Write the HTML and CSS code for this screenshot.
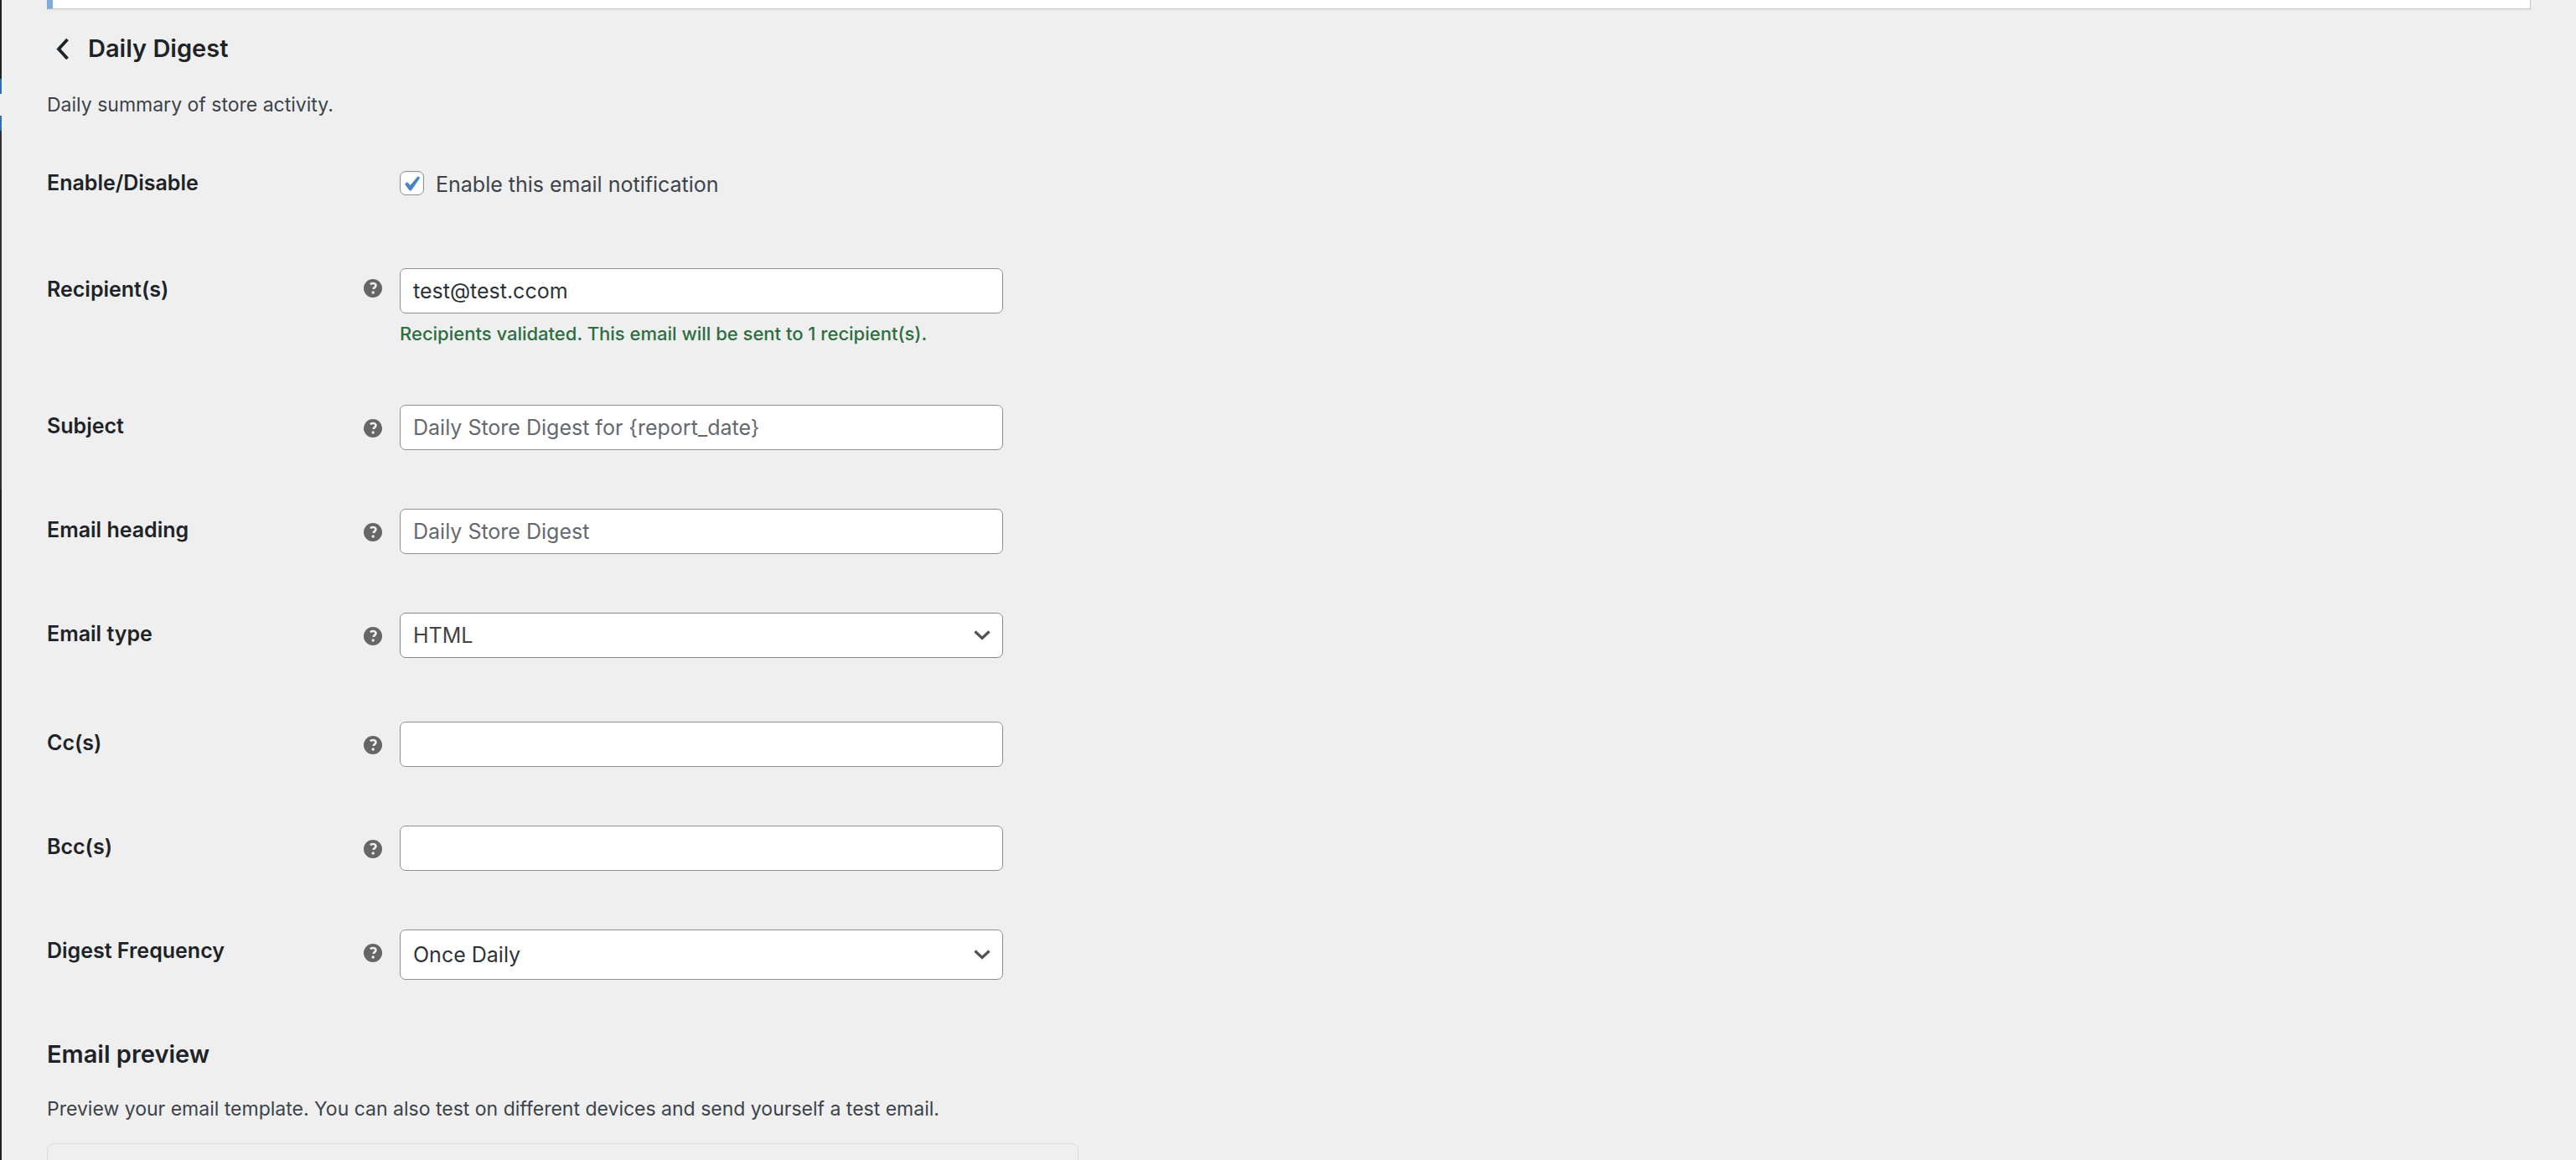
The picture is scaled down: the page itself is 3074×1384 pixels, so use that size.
FILE: index.html
```html
<!DOCTYPE html>
<html lang="en">
<head>
<meta charset="utf-8">
<title>Daily Digest</title>
<link rel="stylesheet" href="styles.css">
</head>
<body>
<svg class="sprite" aria-hidden="true">
  <symbol id="help" viewBox="0 0 22 22">
    <circle cx="11" cy="11" r="11" fill="#666"/>
    <path d="M7.9 6.2C9 5.300 10 5 11.200 5c2 0 3.300.9 3.300 2.600 0 2.200-2.700 2.300-2.800 4.400" fill="none" stroke="#efefef" stroke-width="2.600"/>
    <circle cx="11.200" cy="16" r="1.700" fill="#efefef"/>
  </symbol>
  <symbol id="chevron" viewBox="0 0 20 12">
    <path d="M1.500 1.500 10 9.500l8.500-8" fill="none" stroke="#555" stroke-width="3.200"/>
  </symbol>
</svg>
<div class="layout">
  <aside class="menu">
    <div class="menu-top"></div>
    <div class="menu-current"></div>
    <div class="menu-sub"></div>
  </aside>
  <main class="content">
    <div class="notice"></div>
    <header class="title-row">
      <a class="back" href="#" aria-label="Return to emails">
        <svg viewBox="0 0 15 26"><path d="M13.500 2 3 13.500l10.500 11.500" fill="none" stroke="#1d2327" stroke-width="3.800"/></svg>
      </a>
      <h1 class="heading">Daily Digest</h1>
    </header>
    <p class="text">Daily summary of store activity.</p>

    <form class="form">
      <div class="row row-check">
        <span class="label">Enable/Disable</span>
        <label class="check"><span class="box"><input type="checkbox" checked><svg viewBox="0 0 20 20"><path d="M1 10.500 4 8.200l3.500 3.900L16.700 1.200l2.600 1.900-9.900 14.500c-.9 1.200-2.500 1.200-3.400 0z" fill="#4a84c4"/></svg></span><span class="check-text">Enable this email notification</span></label>
      </div>
      <div class="row">
        <label class="label" for="recipient">Recipient(s)</label>
        <svg class="help help-high"><use href="#help"/></svg>
        <div class="field">
          <input class="control" id="recipient" type="text" value="test@test.ccom">
          <p class="valid">Recipients validated. This email will be sent to 1 recipient(s).</p>
        </div>
      </div>
      <div class="row">
        <label class="label" for="subject">Subject</label>
        <svg class="help"><use href="#help"/></svg>
        <input class="control" id="subject" type="text" placeholder="Daily Store Digest for {report_date}">
      </div>
      <div class="row">
        <label class="label" for="heading">Email heading</label>
        <svg class="help"><use href="#help"/></svg>
        <input class="control" id="heading" type="text" placeholder="Daily Store Digest">
      </div>
      <div class="row row-type">
        <label class="label" for="type">Email type</label>
        <svg class="help"><use href="#help"/></svg>
        <div class="select">
          <select class="control control-type" id="type"><option>HTML</option></select>
          <svg class="chevron"><use href="#chevron"/></svg>
        </div>
      </div>
      <div class="row">
        <label class="label" for="cc">Cc(s)</label>
        <svg class="help"><use href="#help"/></svg>
        <input class="control" id="cc" type="text">
      </div>
      <div class="row">
        <label class="label" for="bcc">Bcc(s)</label>
        <svg class="help"><use href="#help"/></svg>
        <input class="control" id="bcc" type="text">
      </div>
      <div class="row">
        <label class="label" for="frequency">Digest Frequency</label>
        <svg class="help"><use href="#help"/></svg>
        <div class="select">
          <select class="control control-tall" id="frequency"><option>Once Daily</option></select>
          <svg class="chevron"><use href="#chevron"/></svg>
        </div>
      </div>
    </form>

    <h2 class="heading">Email preview</h2>
    <p class="text text-preview">Preview your email template. You can also test on different devices and send yourself a test email.</p>
    <div class="preview"></div>
  </main>
</div>
</body>
</html>
```
FILE: styles.css
```css
* {
  box-sizing: border-box;
}

body {
  margin: 0;
  background: #efefef;
  color: #3c434a;
  font-family: Inter, "Liberation Sans", sans-serif;
  font-size: 25px;
}

h1, h2, p {
  margin: 0;
}

.sprite {
  display: none;
}

.layout {
  display: flex;
  height: 100vh;
  overflow: hidden;
}

.menu {
  flex: none;
  width: 2px;
  background: #1d2327;
}

.menu-top {
  height: 94px;
}

.menu-current {
  height: 62px;
  border: solid #2f6fb5;
  border-width: 18px 0;
  background: #efefef;
}

.menu-sub {
  height: 428px;
  background: #2c3338;
}

.content {
  flex: 1;
  padding: 0 54px;
}

.notice {
  height: 11px;
  background: #fff;
  border: 1px solid #c3c4c7;
  border-top: 0;
  border-left: 7px solid #7facdf;
  box-shadow: 0 1px 2px rgba(0, 0, 0, 0.06);
}

.title-row {
  display: flex;
  align-items: center;
  gap: 23px;
  padding: 27px 0 0 11px;
}

.back {
  display: flex;
}

.back svg {
  width: 15px;
  height: 26px;
}

.heading {
  color: #1d2327;
  font-size: 29px;
  font-weight: 600;
  line-height: 40px;
}

.text {
  padding-top: 31px;
  font-size: 23px;
  line-height: 32px;
}

.form {
  padding: 17px 0 34px;
}

.row {
  display: grid;
  grid-template-columns: 378px 43px minmax(0, 720px);
  align-items: start;
  padding: 35px 0;
}

.row > :last-child {
  grid-column: 3;
}

.row-check {
  min-height: 127px;
}

.row-type {
  padding-bottom: 41px;
}

.label {
  padding-top: 9px;
  color: #1d2327;
  font-weight: 600;
  line-height: 32px;
}

.help {
  width: 22px;
  height: 22px;
  margin-top: 17px;
}

.help-high {
  margin-top: 13px;
}

.check {
  display: flex;
  align-items: flex-start;
  gap: 14px;
  padding-top: 11px;
  line-height: 32px;
}

.box {
  display: grid;
  width: 29px;
  height: 29px;
}

.box input {
  grid-area: 1 / 1;
  width: 29px;
  height: 29px;
  margin: 0;
  appearance: none;
  background: #fff;
  border: 1px solid #8c8f94;
  border-radius: 7px;
  box-shadow: inset 0 1px 3px rgba(0, 0, 0, 0.1);
}

.box svg {
  grid-area: 1 / 1;
  place-self: center;
  width: 20px;
  height: 20px;
}

.control {
  display: block;
  width: 100%;
  height: 54px;
  padding: 0 15px;
  background: #fff;
  border: 1px solid #8c8f94;
  border-radius: 7px;
  color: #2c3338;
  font-family: inherit;
  font-size: 25px;
}

.control::placeholder {
  color: #646970;
  opacity: 1;
}

.select {
  display: grid;
}

.select > * {
  grid-area: 1 / 1;
}

select.control {
  appearance: none;
}

.control-type {
  border-color: #7e8993;
  color: #444;
}

.control-tall {
  height: 60px;
}

.chevron {
  place-self: center end;
  width: 20px;
  height: 12px;
  margin-right: 15px;
  pointer-events: none;
}

.valid {
  padding-top: 9px;
  color: #2c6e3f;
  font-size: 22px;
  font-weight: 500;
  line-height: 30px;
}

.text-preview {
  padding-top: 29px;
}

.preview {
  max-width: 1231px;
  height: 400px;
  margin-top: 25px;
  border: 1px solid #dcdcde;
  border-radius: 8px;
}
```
